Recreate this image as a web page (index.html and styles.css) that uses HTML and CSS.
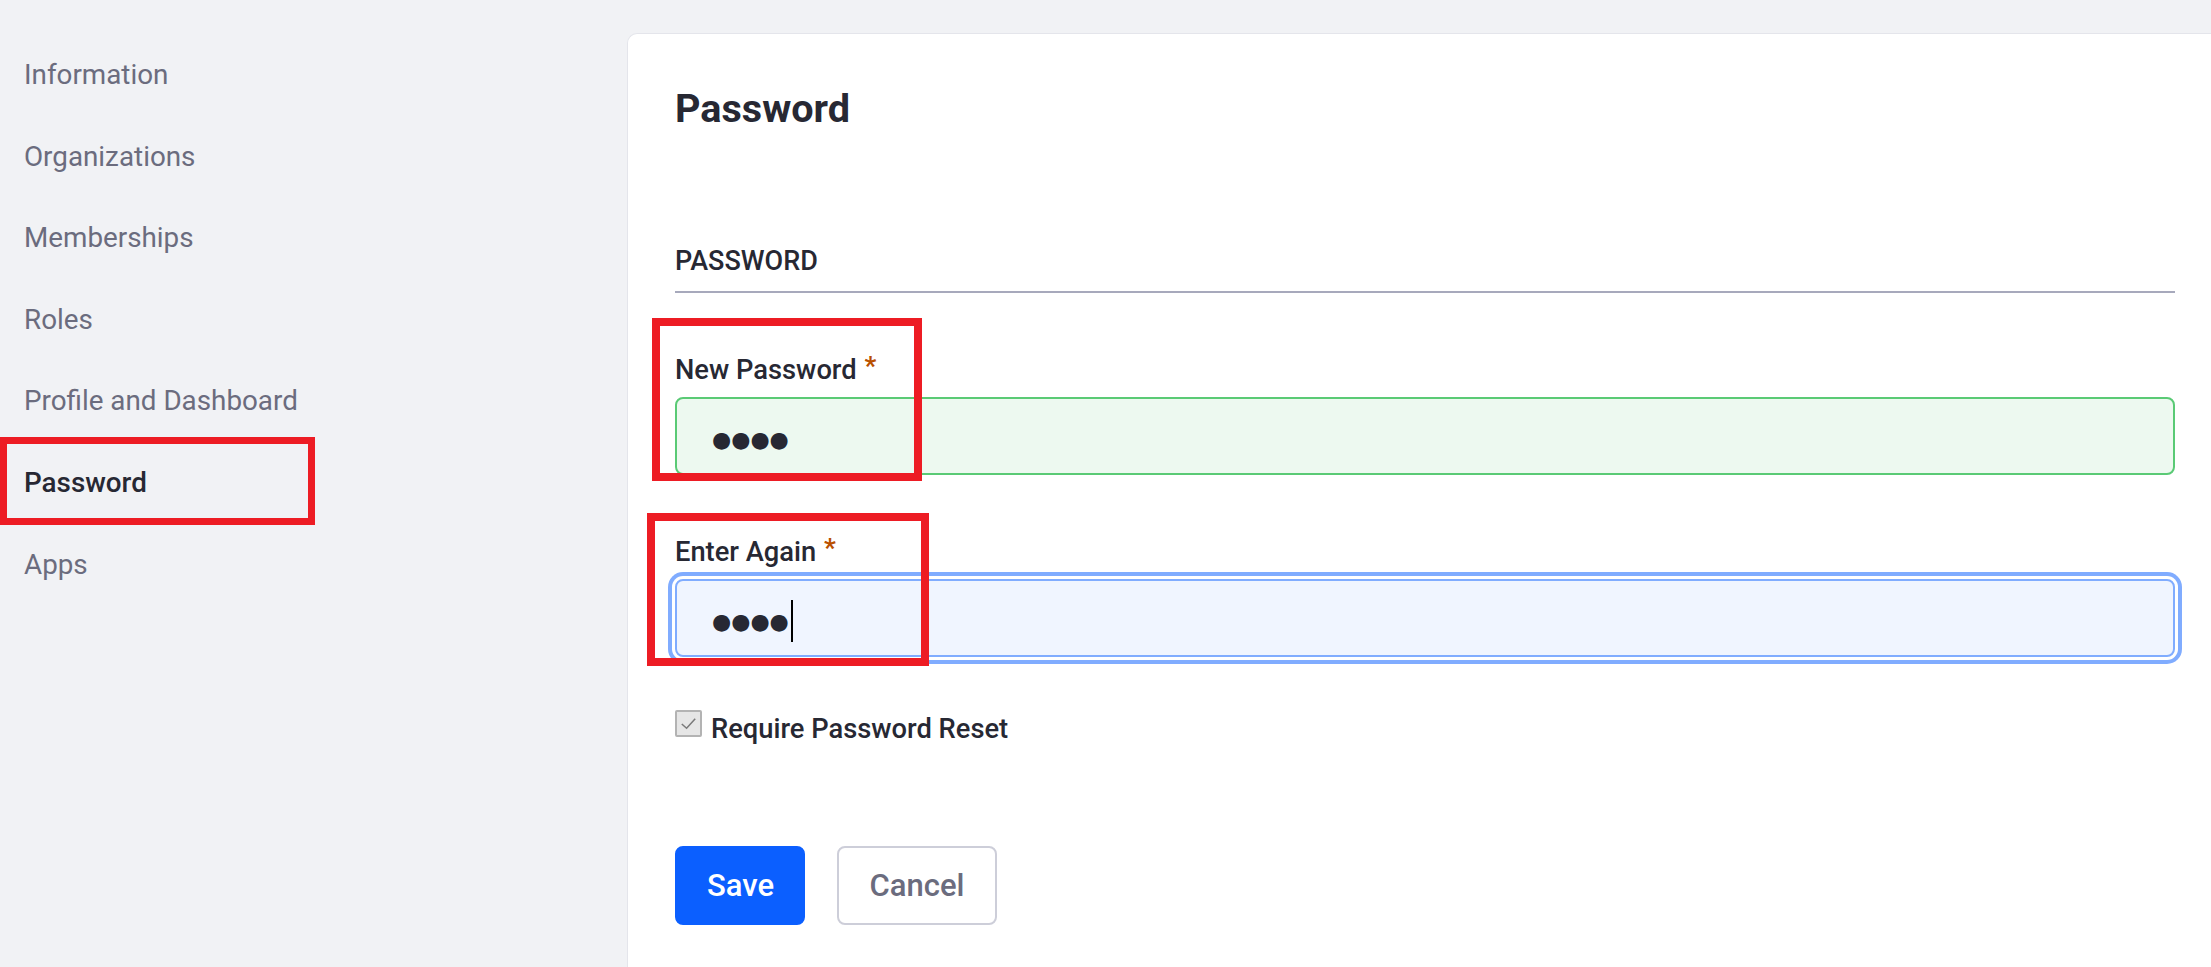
FILE: index.html
```html
<!DOCTYPE html>
<html lang="en">
<head>
<meta charset="utf-8">
<title>Password</title>
<link rel="stylesheet" href="styles.css">
</head>
<body>
<div class="layout">
  <nav class="sidebar">
    <ul class="nav">
      <li class="nav-item">Information</li>
      <li class="nav-item">Organizations</li>
      <li class="nav-item">Memberships</li>
      <li class="nav-item">Roles</li>
      <li class="nav-item">Profile and Dashboard</li>
      <li class="nav-item active">Password<span class="annot annot-nav"></span></li>
      <li class="nav-item">Apps</li>
    </ul>
  </nav>
  <main class="card">
    <h1 class="title">Password</h1>
    <h2 class="section">PASSWORD</h2>
    <div class="field field-first">
      <label class="label">New Password <span class="req">*</span></label>
      <div class="input input-valid"><span class="mask">●●●●</span></div>
      <span class="annot annot-one"></span>
    </div>
    <div class="field field-second">
      <label class="label">Enter Again <span class="req">*</span></label>
      <div class="input input-focus"><span class="mask">●●●●</span><span class="caret"></span></div>
      <span class="annot annot-two"></span>
    </div>
    <div class="check-row">
      <span class="checkbox"><svg viewBox="0 0 24 24" width="23" height="23"><polyline points="5,12.5 10,17 19,7" fill="none" stroke="#7a7a7a" stroke-width="1.6"/></svg></span>
      <span class="check-label">Require Password Reset</span>
    </div>
    <div class="actions">
      <button class="btn btn-primary">Save</button>
      <button class="btn btn-secondary">Cancel</button>
    </div>
  </main>
</div>
</body>
</html>
```
FILE: styles.css
```css
html, body {
  margin: 0;
  padding: 0;
}
body {
  background: #f1f2f5;
  font-family: Roboto, "Open Sans", "Liberation Sans", sans-serif;
  color: #272833;
  height: 967px;
  overflow: hidden;
}
.layout {
  display: flex;
  align-items: flex-start;
}
.sidebar {
  flex: 0 0 627px;
  padding-top: 34px;
}
.nav {
  list-style: none;
  margin: 0;
  padding: 0;
}
.nav-item {
  position: relative;
  font-size: 27.8px;
  line-height: 41.6px;
  padding: 20px 24px;
  color: #6b6c7e;
}
.nav-item.active {
  color: #272833;
  font-weight: 500;
}
.annot {
  position: absolute;
  border: 8px solid #ed1c24;
  box-sizing: border-box;
  pointer-events: none;
}
.annot-nav {
  left: 0;
  top: -5px;
  width: 315px;
  height: 88px;
  border-width: 7px;
}
.card {
  flex: 1;
  margin-top: 33px;
  height: 934px;
  box-sizing: border-box;
  background: #fff;
  border: 1px solid #e4e5eb;
  border-right: none;
  border-bottom: none;
  border-radius: 10px 0 0 0;
  padding: 51px 36px 0 47px;
}
.title {
  margin: 0;
  font-size: 39.6px;
  line-height: 47px;
  font-weight: 700;
  color: #272833;
}
.section {
  margin: 109px 0 0;
  padding-bottom: 10px;
  border-bottom: 2px solid #a7a9bc;
  font-size: 27px;
  line-height: 40px;
  font-weight: 500;
  color: #272833;
}
.field {
  position: relative;
}
.field-first {
  margin-top: 53px;
}
.field-second {
  margin-top: 53px;
}
.label {
  display: block;
  font-size: 27.3px;
  line-height: 40px;
  font-weight: 500;
  color: #272833;
  margin-bottom: 7px;
}
.req {
  color: #b95000;
  font-weight: 700;
  margin-left: 1px;
  vertical-align: 4px;
  font-size: 26px;
}
.input {
  height: 78px;
  box-sizing: border-box;
  border: 2px solid;
  border-radius: 8px;
  padding: 0 32px 0 35px;
  display: flex;
  align-items: center;
}
.input-valid {
  border-color: #5aca75;
  background: #edf9f0;
}
.input-focus {
  border-color: #80acff;
  background: #f0f5ff;
  box-shadow: 0 0 0 3px #fff, 0 0 0 7px #80acff;
}
.mask {
  font-family: "DejaVu Sans", sans-serif;
  font-size: 22px;
  letter-spacing: 0;
  color: #272833;
  padding-top: 6px;
}
.caret {
  width: 2px;
  height: 42px;
  background: #000;
  margin-left: 2px;
  margin-top: 6px;
}
.annot-one {
  left: -23px;
  top: -28px;
  width: 270px;
  height: 163px;
}
.annot-two {
  left: -28px;
  top: -15px;
  width: 282px;
  height: 153px;
}
.check-row {
  margin-top: 52px;
  display: flex;
  align-items: flex-start;
  gap: 9px;
}
.checkbox {
  width: 27px;
  height: 27px;
  box-sizing: border-box;
  margin-top: 1px;
  background: #e6e6e6;
  border: 2px solid #b3b3b3;
  border-radius: 2px;
  display: flex;
  align-items: center;
  justify-content: center;
}
.check-label {
  font-size: 27.3px;
  line-height: 40px;
  font-weight: 500;
  color: #272833;
}
.actions {
  margin-top: 97px;
  display: flex;
  gap: 32px;
}
.btn {
  height: 79px;
  box-sizing: border-box;
  border: 2px solid transparent;
  border-radius: 8px;
  padding: 0 30px;
  font-family: Roboto, "Open Sans", sans-serif;
  font-size: 31px;
  font-weight: 500;
  cursor: pointer;
}
.btn-primary {
  background: #0b5fff;
  border-color: #0b5fff;
  color: #fff;
  width: 130px;
}
.btn-secondary {
  background: #fff;
  border-color: #cdced9;
  color: #6b6c7e;
  width: 160px;
}
```
